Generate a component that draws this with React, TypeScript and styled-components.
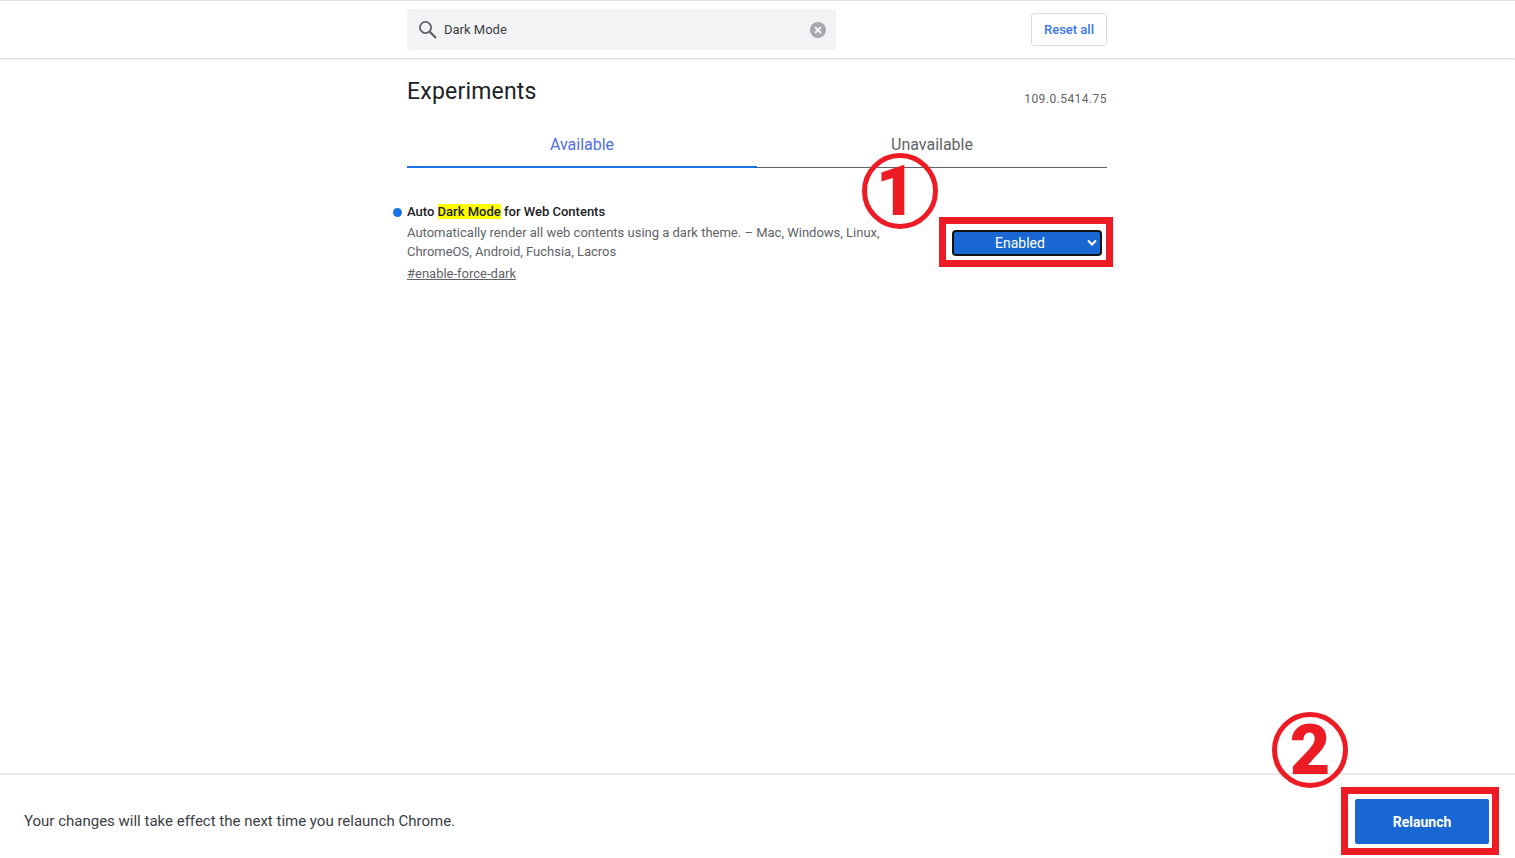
import styled, { createGlobalStyle } from "styled-components";

const GlobalStyle = createGlobalStyle`
  html, body {
    margin: 0;
    height: 100%;
    background: #fff;
    overflow: hidden;
  }
  body {
    font-family: Roboto, "Liberation Sans", sans-serif;
    -webkit-font-smoothing: antialiased;
  }
  #root {
    height: 100%;
  }
`;

const Page = styled.div`
  height: 858px;
  display: flex;
  flex-direction: column;
`;

const Header = styled.header`
  height: 57px;
  flex: none;
  border-top: 1px solid #dcdcdc;
  box-shadow: 0 1px 2px rgba(60, 64, 67, 0.25);
  display: flex;
  align-items: center;
  padding-left: 407px;
`;

const HeaderInner = styled.div`
  width: 700px;
  display: flex;
  align-items: center;
  justify-content: space-between;
`;

const SearchBox = styled.div`
  width: 429px;
  height: 41px;
  box-sizing: border-box;
  padding: 0 10px 0 11px;
  background: #f1f3f4;
  border-radius: 3px;
  display: flex;
  align-items: center;
  gap: 6px;
`;

const SearchText = styled.span`
  flex: 1;
  font-size: 13px;
  color: #3c4043;
`;

const ResetButton = styled.button`
  width: 76px;
  height: 33px;
  padding: 0;
  background: #fff;
  border: 1px solid #dadce0;
  border-radius: 3px;
  color: #3b78e7;
  font-family: inherit;
  font-size: 13px;
  font-weight: 500;
`;

const Main = styled.main`
  flex: 1;
  width: 700px;
  margin-left: 407px;
  display: flex;
  flex-direction: column;
`;

const TitleRow = styled.div`
  display: flex;
  justify-content: space-between;
  align-items: flex-end;
  height: 49px;
`;

const Title = styled.h1`
  margin: 0;
  font-size: 23px;
  font-weight: 400;
  line-height: 30px;
  color: #202124;
  letter-spacing: 0.2px;
`;

const Version = styled.span`
  font-size: 12px;
  line-height: 14px;
  letter-spacing: 0.45px;
  color: #5f6368;
  position: relative;
  top: -1px;
`;

const Tabs = styled.div`
  display: flex;
  margin-top: 18px;
  border-bottom: 1px solid #5f6368;
  height: 42px;
`;

const Tab = styled.div<{ $active?: boolean }>`
  flex: 1;
  text-align: center;
  font-size: 16px;
  line-height: 18px;
  padding-top: 11px;
  box-sizing: border-box;
  color: ${(p) => (p.$active ? "#4f6fe0" : "#5f6368")};
  height: ${(p) => (p.$active ? "43px" : "42px")};
  border-bottom: ${(p) => (p.$active ? "2px solid #1a73e8" : "none")};
`;

const Experiment = styled.section`
  margin-top: 34px;
  display: flex;
  justify-content: space-between;
  position: relative;
`;

const ExperimentText = styled.div`
  width: 480px;
  font-size: 13px;
  color: #5f6368;
`;

const Dot = styled.span`
  position: absolute;
  left: -14px;
  top: 6px;
  width: 9px;
  height: 9px;
  border-radius: 50%;
  background: #1a73e8;
`;

const ExperimentName = styled.h2`
  margin: 0;
  font-size: 13px;
  font-weight: 500;
  line-height: 19px;
  color: #202124;
`;

const Mark = styled.mark`
  background: #ffff00;
  color: #202124;
`;

const Description = styled.p`
  margin: 2px 0 0;
  line-height: 19px;
`;

const Permalink = styled.a`
  display: inline-block;
  margin-top: 3px;
  line-height: 19px;
  color: #5f6368;
  text-decoration: underline;
`;

const SelectFrame = styled.div`
  position: relative;
  width: 150px;
  height: 26px;
  margin: 28px 5px 0 0;
`;

const EnabledSelect = styled.div`
  width: 100%;
  height: 100%;
  box-sizing: border-box;
  border: 2px solid #101418;
  border-radius: 4px;
  background: #1967d2;
  color: #fff;
  font-size: 14px;
  display: flex;
  align-items: center;
  justify-content: center;
  padding: 0 14px 1px 0;
  position: relative;
`;

const Chevron = styled.svg`
  position: absolute;
  right: 3px;
  top: 7px;
`;

const RedBox = styled.div<{ $top: number; $right: number; $bottom: number; $left: number }>`
  position: absolute;
  top: ${(p) => p.$top}px;
  right: ${(p) => p.$right}px;
  bottom: ${(p) => p.$bottom}px;
  left: ${(p) => p.$left}px;
  border: 7px solid #ed1c24;
  pointer-events: none;
`;

const Badge = styled.div<{ $left: number; $top: number; $nudge?: number }>`
  position: absolute;
  left: ${(p) => p.$left}px;
  top: ${(p) => p.$top}px;
  width: 76px;
  height: 76px;
  box-sizing: border-box;
  border: 5px solid #ed1c24;
  border-radius: 50%;
  padding-right: ${(p) => p.$nudge ?? 0}px;
  color: #ed1c24;
  font-family: Roboto, "Liberation Sans", sans-serif;
  font-weight: 900;
  font-size: 70px;
  line-height: 70px;
  display: flex;
  align-items: center;
  justify-content: center;
`;

const Footer = styled.footer`
  height: 83px;
  flex: none;
  border-top: 2px solid #e8e8e8;
  padding: 0 26px 0 24px;
  display: flex;
  align-items: center;
  justify-content: space-between;
`;

const FooterText = styled.span`
  font-size: 15px;
  color: #3c4043;
  position: relative;
  top: 4px;
`;

const ButtonFrame = styled.div`
  position: relative;
  width: 134px;
  height: 45px;
  margin-top: 10px;
`;

const RelaunchButton = styled.button`
  width: 100%;
  height: 100%;
  border: 0;
  border-radius: 2px;
  background: #1967d2;
  color: #fff;
  font-family: inherit;
  font-size: 14px;
  font-weight: 700;
`;

export default function App() {
  return (
    <Page>
      <GlobalStyle />
      <Header>
        <HeaderInner>
          <SearchBox>
            <svg width="20" height="20" viewBox="0 0 20 20" fill="none" stroke="#5f6368" strokeWidth="1.8">
              <circle cx="7.5" cy="7.5" r="5.6" />
              <path d="M11.6 11.6 L18 18" strokeWidth="2.2" />
            </svg>
            <SearchText>Dark Mode</SearchText>
            <svg width="16" height="16" viewBox="0 0 16 16">
              <circle cx="8" cy="8" r="8" fill="#a6a8ab" />
              <path d="M5 5 L11 11 M11 5 L5 11" stroke="#f1f3f4" strokeWidth="2" />
            </svg>
          </SearchBox>
          <ResetButton>Reset all</ResetButton>
        </HeaderInner>
      </Header>
      <Main>
        <TitleRow>
          <Title>Experiments</Title>
          <Version>109.0.5414.75</Version>
        </TitleRow>
        <Tabs>
          <Tab $active>Available</Tab>
          <Tab>Unavailable</Tab>
        </Tabs>
        <Experiment>
          <Dot />
          <ExperimentText>
            <ExperimentName>
              Auto <Mark>Dark Mode</Mark> for Web Contents
            </ExperimentName>
            <Description>
              Automatically render all web contents using a dark theme. – Mac, Windows, Linux, ChromeOS, Android,
              Fuchsia, Lacros
            </Description>
            <Permalink>#enable-force-dark</Permalink>
          </ExperimentText>
          <SelectFrame>
            <EnabledSelect>
              Enabled
              <Chevron width="10" height="8" viewBox="0 0 10 8" fill="none" stroke="#fff" strokeWidth="2">
                <path d="M1 1.5 L5 5.5 L9 1.5" />
              </Chevron>
            </EnabledSelect>
            <RedBox $top={-13} $right={-11} $bottom={-11} $left={-13} />
          </SelectFrame>
        </Experiment>
      </Main>
      <Footer>
        <FooterText>Your changes will take effect the next time you relaunch Chrome.</FooterText>
        <ButtonFrame>
          <RelaunchButton>Relaunch</RelaunchButton>
          <RedBox $top={-12} $right={-10} $bottom={-11} $left={-14} />
        </ButtonFrame>
      </Footer>
      <Badge $left={862} $top={153} $nudge={8}>1</Badge>
      <Badge $left={1272} $top={712}>2</Badge>
    </Page>
  );
}
